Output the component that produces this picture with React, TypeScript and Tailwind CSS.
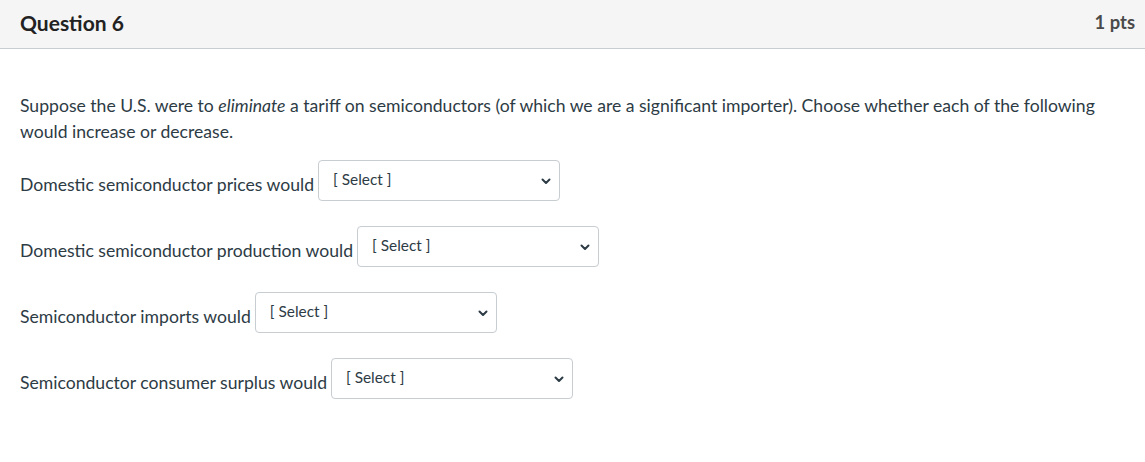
const ROWS = [
  'Domestic semiconductor prices would',
  'Domestic semiconductor production would',
  'Semiconductor imports would',
  'Semiconductor consumer surplus would',
]

function Chevron() {
  return (
    <svg width="10" height="7" viewBox="0 0 10 7" fill="none">
      <path d="M1.5 1.5L5 5L8.5 1.5" stroke="#2d3b45" strokeWidth="2" strokeLinecap="round" strokeLinejoin="round" />
    </svg>
  )
}

function SelectBox() {
  return (
    <div className="relative w-[242px] h-[41px] shrink-0 rounded-[4px] border border-[#c7cdd1] bg-white">
      <span className="absolute left-[14px] top-[8px] text-[15.4px] leading-[20px] text-[#2d3b45]">[ Select ]</span>
      <span className="absolute right-[8px] top-[17px]"><Chevron /></span>
    </div>
  )
}

export default function App() {
  return (
    <div className="w-[1145px] h-[462px] bg-white text-[#2d3b45]" style={{ fontFamily: 'Lato, "Open Sans", sans-serif' }}>
      <div className="flex items-center justify-between h-[49px] bg-[#f5f5f5] border-b border-[#c7cdd1] pl-5 pr-[10px]">
        <span className="text-[21px] font-bold text-[#222] pb-[3px]">Question 6</span>
        <span className="text-[18.4px] font-bold text-[#4a4a4a] pb-[3px]">1 pts</span>
      </div>
      <div className="px-5 pt-[44px]">
        <p className="text-[17.6px] leading-[26px]">
          Suppose the U.S. were to <em>eliminate</em> a tariff on semiconductors (of which we are a significant importer). Choose whether each of the following would increase or decrease.
        </p>
        <div className="flex flex-col gap-[25px] mt-[15px]">
          {ROWS.map((label) => (
            <div key={label} className="flex items-end gap-[4px]">
              <span className="text-[17.6px] leading-[24px] pb-[4px]">{label}</span>
              <SelectBox />
            </div>
          ))}
        </div>
      </div>
    </div>
  )
}
